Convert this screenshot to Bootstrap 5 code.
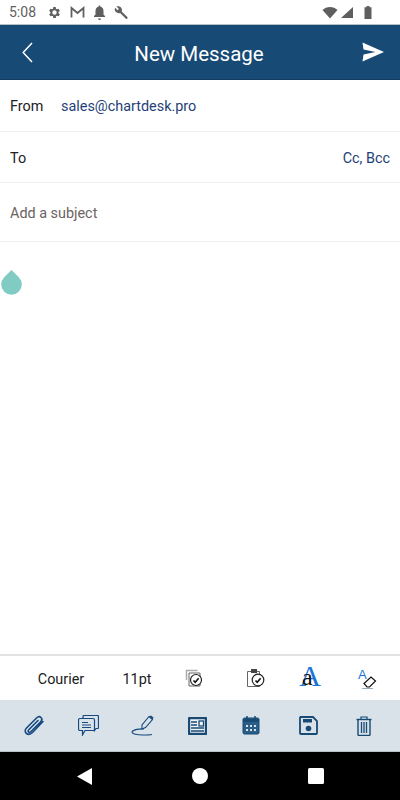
<!DOCTYPE html>
<html lang="en">
<head>
<meta charset="UTF-8">
<meta name="viewport" content="width=device-width, initial-scale=1.0">
<title>New Message</title>
<link href="https://cdn.jsdelivr.net/npm/bootstrap@5.3.0/dist/css/bootstrap.min.css" rel="stylesheet">
<style>
body { font-family: Roboto, "Liberation Sans", sans-serif; background: #fff; }
.app-screen { width: 400px; height: 800px; overflow: hidden; }
.status-bar { height: 25px; padding-left: 9px; color: #5f5f5f; font-size: 14px; border-bottom: 1px solid #b9c0c5; }
.status-time { width: 38px; }
.status-icons { gap: 8px; }
.status-right { gap: 2px; padding-right: 28px; }
.app-header { height: 55px; background: #174a75; border-bottom: 1px solid #123c60; color: #fff; padding: 0 16px 0 22px; }
.app-title { font-size: 20.500px; padding-top: 4px; padding-left: 3px; }
.field-row { padding: 2px 10px 0; font-size: 14.400px; color: #212121; border-bottom: 1px solid #f0f0f0; }
.row-from { height: 52px; }
.row-to { height: 51px; padding-top: 4px; }
.row-subject { height: 59px; color: #6b6363; padding-top: 4px; }
.from-label { width: 51px; }
.link-navy { color: #1f3f77; }
.editor-area { padding-top: 28px; padding-left: 1px; }
.format-bar { height: 46px; border-top: 2px solid #e2e2e2; padding-left: 14px; font-size: 14.400px; color: #212121; display: grid; grid-template-columns: 94px 58px 58px 62px 48px 66px; align-items: center; justify-items: center; }
.format-text { padding-top: 4px; }
.font-icon { margin: -2px 0; }
.action-bar { height: 52px; background: #d9e2e8; border-bottom: 1px solid #b9c0c5; padding-left: 7px; display: grid; grid-template-columns: 54px 54px 56px 52px 56px 58px 54px; align-items: center; justify-items: center; }
.nav-bar { height: 48px; background: #000; display: grid; grid-template-columns: repeat(3, 116px); justify-content: center; align-items: center; justify-items: center; }
</style>
</head>
<body>
<div class="app-screen d-flex flex-column">

  <!-- Status bar -->
  <div class="status-bar d-flex align-items-center">
    <span class="status-time">5:08</span>
    <div class="status-icons d-flex align-items-center">
      <svg width="15" height="15" viewBox="0 0 24 24" fill="#5f5f5f"><path d="M19.4 13a7.5 7.5 0 0 0 0-2l2.1-1.6-2-3.5-2.5 1a7.500 7.500 0 0 0-1.700-1L15 3.200h-4l-.4 2.700a7.500 7.500 0 0 0-1.700 1l-2.500-1-2 3.500L6.500 11a7.500 7.500 0 0 0 0 2l-2.100 1.600 2 3.500 2.500-1c.5.400 1.100.700 1.700 1l.4 2.700h4l.4-2.700c.6-.3 1.200-.6 1.700-1l2.500 1 2-3.500zM13 15.500a3.500 3.500 0 1 1 0-7 3.500 3.500 0 0 1 0 7z" transform="translate(-1 0)"/></svg>
      <svg width="15" height="13" viewBox="0 0 15 13" fill="none" stroke="#5f5f5f" stroke-width="1.800"><path d="M1.500 11.500V2l6 5 6-5v9.500"/></svg>
      <svg width="13" height="15" viewBox="0 0 13 15" fill="#5f5f5f"><path d="M6.500 0.500c.7 0 1 .5 1 1.200 2 .5 3 2.200 3 4.300v3.500l1.500 1.500v1H1v-1l1.500-1.500V6c0-2.100 1-3.800 3-4.300 0-.7.300-1.200 1-1.200zM5 13.500h3a1.500 1.500 0 0 1-3 0z"/></svg>
      <svg width="15" height="15" viewBox="0 0 15 15" fill="#5f5f5f"><path d="M13.500 12.300 7.700 6.500C8.200 5 7.900 3.400 6.800 2.300 5.600 1.100 3.900.9 2.500 1.500l2.400 2.400-1.300 1.300-2.500-2.400C.4 4.200.7 5.900 1.900 7.100c1.100 1.100 2.700 1.400 4.200.9l5.800 5.800c.3.300.7.300 1 0l.6-.6c.3-.3.300-.6 0-.9z"/></svg>
    </div>
    <div class="status-right d-flex align-items-center ms-auto">
      <svg width="16" height="13" viewBox="0 0 16 13" fill="#5f5f5f"><path d="M0.500 4C4.500 0 11.500 0 15.500 4L8 12.500z"/></svg>
      <svg width="14" height="13" viewBox="0 0 14 13" fill="#5f5f5f"><path d="M13 1v11H1z"/></svg>
      <svg class="ms-2" width="8" height="13" viewBox="0 0 8 13" fill="#5f5f5f"><path d="M2.500 0h3v1.200H7.500V13H.5V1.200h2z"/></svg>
    </div>
  </div>

  <!-- Header -->
  <div class="app-header d-flex align-items-center justify-content-between">
    <svg width="11" height="21" viewBox="0 0 11 21" fill="none" stroke="#fff" stroke-width="1.500"><path d="M10 1 1.200 10.500 10 20"/></svg>
    <span class="app-title">New Message</span>
    <svg width="22" height="20" viewBox="0 0 22 20" fill="#fff"><path d="M.5 .5 22 10 .5 19.500 1.500 12.500l12-2.500-12-2.500z"/></svg>
  </div>

  <!-- Fields -->
  <div class="field-row row-from d-flex align-items-center">
    <span class="from-label">From</span>
    <span class="link-navy">sales@chartdesk.pro</span>
  </div>
  <div class="field-row row-to d-flex align-items-center justify-content-between">
    <span>To</span>
    <span class="link-navy">Cc, Bcc</span>
  </div>
  <div class="field-row row-subject d-flex align-items-center">Add a subject</div>

  <!-- Editor with cursor handle -->
  <div class="editor-area flex-grow-1">
    <svg class="d-block" width="21" height="25" viewBox="0 0 21 25" fill="#80cbc4"><path d="M10.500 0 3.200 7.300a10.300 10.300 0 1 0 14.600 0z"/></svg>
  </div>

  <!-- Font and format tools -->
  <div class="format-bar">
    <span class="format-text">Courier</span>
    <span class="format-text">11pt</span>
    <svg width="20" height="18" viewBox="0 0 20 18" fill="none" stroke="#555">
      <path d="M1.500 11V1.500h11" stroke="#aaa" stroke-width="1.500"/>
      <path d="M4 4h11v13H4z" fill="#fff" stroke="#666"/>
      <circle cx="11" cy="11" r="5.500" fill="#fff" stroke="#222" stroke-width="1.200"/>
      <path d="M8.500 11.500l1.700 1.700 3.400-4" stroke="#111" stroke-width="1.600"/>
    </svg>
    <svg width="19" height="18" viewBox="0 0 19 18" fill="none" stroke="#555">
      <path d="M1.500 2.500h12v15h-12z" fill="#fff" stroke="#666"/>
      <path d="M5 0h6v4H5z" fill="#444" stroke="none"/>
      <circle cx="12" cy="11" r="5.800" fill="#fff" stroke="#222" stroke-width="1.200"/>
      <path d="M9.500 11.500l1.700 1.700 3.400-4" stroke="#111" stroke-width="1.600"/>
    </svg>
    <svg class="font-icon" width="28" height="40" viewBox="0 0 28 40">
      <text x="14" y="28" text-anchor="middle" font-family="Liberation Serif, serif" font-size="30" fill="#1a73d8">A</text>
      <text x="6" y="27" font-family="Liberation Serif, serif" font-size="24" fill="#111">a</text>
    </svg>
    <svg width="20" height="26" viewBox="0 0 20 26">
      <text x="1" y="14" font-family="Liberation Sans, sans-serif" font-size="13" fill="#1a73d8">A</text>
      <path d="M7 18.500 14 12l4.500 4-6 6h-2.500z" fill="#fff" stroke="#111" stroke-width="1.200"/>
      <path d="M5 23.500h11" stroke="#9ab" stroke-width="1"/>
    </svg>
  </div>

  <!-- Action tools -->
  <div class="action-bar">
    <svg width="22" height="22" viewBox="0 0 22 22" fill="none" stroke="#174a80" stroke-width="1.600" stroke-linecap="round"><path d="M20 6.500 9.500 17.500c-2 2-4 2.500-6 1s-1.500-4 0-5.500L13.500 3c1.500-1.500 3.500-1.500 4.500-.5s1 3-.5 4.500L8 16.500c-1 1-2 1-2.500.5s-.5-1.500.5-2.500L15 5.500"/></svg>
    <svg width="21" height="21" viewBox="0 0 21 21" fill="none" stroke="#174a80" stroke-width="1.200">
      <path d="M5 3V1.500a1 1 0 0 1 1-1h13.500a1 1 0 0 1 1 1v11a1 1 0 0 1-1 1H18l-2 3"/>
      <path d="M2 3.500h13a1.500 1.500 0 0 1 1.500 1.500v9a1.500 1.500 0 0 1-1.500 1.500H7L4.500 20v-4.500H2A1.500 1.500 0 0 1 .5 14V5A1.500 1.500 0 0 1 2 3.500z" fill="#d9e2e8"/>
      <path d="M4 7.500h6M4 10h9M4 12.500h9" stroke-width="1"/>
    </svg>
    <svg width="24" height="21" viewBox="0 0 24 21" fill="none" stroke="#174a80">
      <path d="M11 14V10l7-8.500 3.500 3L14.500 12.500z" stroke-width="1.100"/>
      <path d="M18 1.500l3.500 3 1-2-2.500-2z" fill="#174a80" stroke="none"/>
      <path d="M13 14c-4-.5-11 .5-12 3-.5 2 6 3 10 3s8 0 10-.5" stroke-width="1.100"/>
    </svg>
    <svg width="19" height="18" viewBox="0 0 19 18" fill="none" stroke="#174a75">
      <rect x="1" y="1" width="17" height="16" rx=".5" fill="#f0f3f5" stroke-width="2.400"/>
      <path d="M3 5h6M3 8h6M3 11h13M3 14h13" stroke-width="1.300"/>
      <rect x="11" y="4" width="4.500" height="5" stroke-width="1.300"/>
    </svg>
    <svg width="18" height="19" viewBox="0 0 18 19">
      <rect x="1" y="2" width="16" height="16" rx="1.500" fill="#2a5d88" stroke="#174a75"/>
      <path d="M1 3h16v3H1z" fill="#174a75"/>
      <path d="M5 0v4M13 0v4" stroke="#174a75" stroke-width="1.500"/>
      <path d="M4 9h2v2H4zM8 9h2v2H8zM12 9h2v2h-2zM4 13h2v2H4zM8 13h2v2H8zM12 13h2v2h-2z" fill="#d9e2e8"/>
    </svg>
    <svg width="19" height="19" viewBox="0 0 19 19" fill="none" stroke="#174a75" stroke-width="1.800">
      <path d="M1.500 1h12.500l4 4v12a1 1 0 0 1-1 1H2a1 1 0 0 1-1-1V1.500z"/>
      <path d="M4 3h9v3.500H4z" fill="#174a75" stroke="none"/>
      <circle cx="9.500" cy="12.500" r="2.800" fill="#174a75" stroke="none"/>
    </svg>
    <svg width="16" height="20" viewBox="0 0 16 20" fill="none" stroke="#174a75">
      <path d="M0.500 3.500h15" stroke-width="1.400"/>
      <path d="M5 3V1h6v2" stroke-width="1.200"/>
      <path d="M2 4v14.500a1 1 0 0 0 1 1h10a1 1 0 0 0 1-1V4" stroke-width="1.400"/>
      <path d="M5.500 6v11M8 6v11M10.500 6v11" stroke-width="1.300"/>
    </svg>
  </div>

  <!-- Android navigation -->
  <div class="nav-bar">
    <svg width="15" height="17" viewBox="0 0 15 17" fill="#fff"><path d="M0 8.500 15 0v17z"/></svg>
    <svg width="16" height="16" viewBox="0 0 16 16" fill="#fff"><circle cx="8" cy="8" r="8"/></svg>
    <svg width="16" height="16" viewBox="0 0 16 16" fill="#fff"><rect width="16" height="16" rx="1.500"/></svg>
  </div>

</div>
<script src="https://cdn.jsdelivr.net/npm/bootstrap@5.3.0/dist/js/bootstrap.bundle.min.js"></script>
</body>
</html>
